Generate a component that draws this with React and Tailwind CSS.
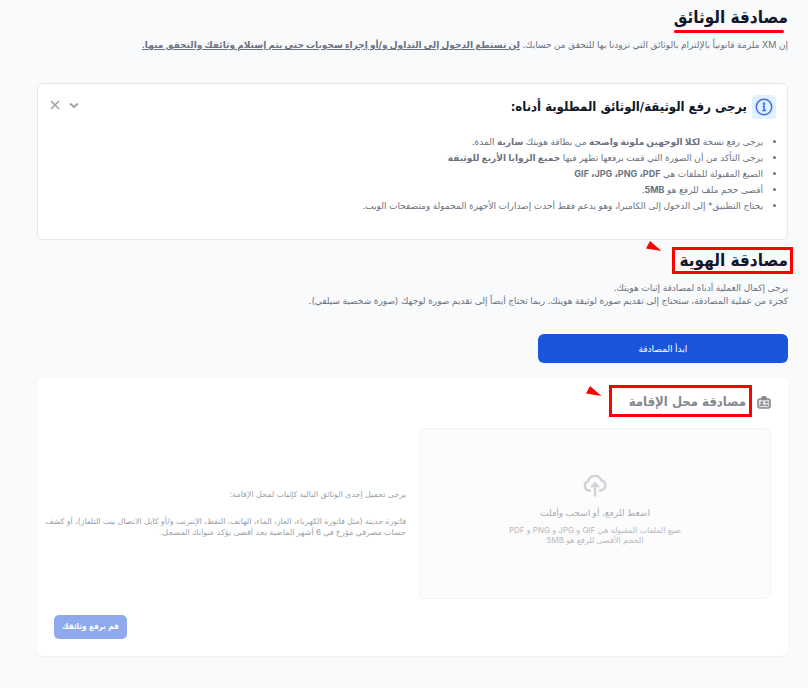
const requisitos = [
  <>
    يرجى رفع نسخة <b>لكلا الوجهين ملونة واضحة</b> من بطاقة هويتك <b>سارية</b> المدة.
  </>,
  <>
    يرجى التأكد من أن الصورة التي قمت برفعها تظهر فيها <b>جميع الزوايا الأربع للوثيقة</b>
  </>,
  <>
    الصيغ المقبولة للملفات هي <b>GIF ،JPG ،PNG ،PDF</b>
  </>,
  <>
    أقصى حجم ملف للرفع هو <b>5MB</b>.
  </>,
  <>يحتاج التطبيق* إلى الدخول إلى الكاميرا، وهو يدعم فقط أحدث إصدارات الأجهزة المحمولة ومتصفحات الويب.</>,
];

function InfoIcon() {
  return (
    <span className="flex h-6 w-6 shrink-0 items-center justify-center rounded bg-[#e1effe]">
      <svg viewBox="0 0 20 20" fill="none" stroke="#3f6fe4" strokeWidth="1.7" className="h-[18px] w-[18px]">
        <circle cx="10" cy="10" r="8.6" />
        <path d="M8.4 9.2h1.8v4.4M8 13.8h4.2" />
        <circle cx="10" cy="6.3" r="0.6" />
      </svg>
    </span>
  );
}

function IdIcon() {
  return (
    <svg viewBox="0 0 14 13" fill="none" stroke="#868a90" strokeWidth="1.6" className="h-[13px] w-[14px] shrink-0">
      <rect x="1" y="3" width="12" height="9" rx="2" fill="#e3e4e6" />
      <path d="M5 3.500V2a1.200 1.200 0 0 1 1.200-1.200h1.600A1.200 1.200 0 0 1 9 2v1.500Z" fill="#868a90" />
      <circle cx="4.8" cy="6.6" r="0.9" strokeWidth="1" fill="#868a90" />
      <path d="M2.800 10c.4-1.600 3.600-1.600 4 0M8.200 6.300h3.200M8.200 9.300h3.200" strokeWidth="1.400" />
    </svg>
  );
}

function UploadIcon() {
  return (
    <svg
      viewBox="0 0 24 24"
      fill="none"
      stroke="#cfd2d8"
      strokeWidth="2.4"
      strokeLinecap="round"
      strokeLinejoin="round"
      className="h-6 w-6"
    >
      <path d="M7 17.500H6.500A4.700 4.700 0 0 1 5.200 8.300 6.800 6.800 0 0 1 18.200 7.200 5.200 5.200 0 0 1 17.500 17.500H17M12 22.500V11M8.800 13.500 12 10.300l3.200 3.200" />
    </svg>
  );
}

function Flecha({ className }) {
  return (
    <svg viewBox="0 0 16 12" fill="#fe0000" className={`absolute h-3 w-4 ${className}`}>
      <path d="M4 1 15.500 11 0 8.500Z" />
    </svg>
  );
}

export default function App() {
  return (
    <div
      dir="rtl"
      className="min-h-screen bg-[#f9fafb] pt-1 pr-5 pb-8 pl-[37px] font-[Inter,'DejaVu_Sans',sans-serif] text-[#6b7280]"
    >
      {/* Documentos */}
      <header className="h-[79px]">
        <h1 className="relative inline-block font-['DejaVu_Sans_Condensed','DejaVu_Sans',sans-serif] text-[17px] leading-[26px] font-bold text-[#111827]">
          مصادقة الوثائق
          <span className="absolute top-[26px] right-1 left-0 h-[3px] rounded-full bg-[#fe0000]" />
        </h1>
        <p className="mt-2 text-[9px] leading-[14px] whitespace-nowrap">
          إن XM ملزمة قانونياً بالإلتزام بالوثائق التي تزودنا بها للتحقق من حسابك.{" "}
          <b className="underline">
            لن تستطع الدخول إلى التداول و/أو إجراء سحوبات حتى يتم إستلام وثائقك والتحقق منها.
          </b>
        </p>
      </header>

      <section className="rounded-md border border-[#e5e7eb] bg-white px-[11px] pt-[11px] pb-[25px]">
        <div className="flex items-center">
          <InfoIcon />
          <h2 className="mr-[5px] flex-1 font-['DejaVu_Sans_Condensed','DejaVu_Sans',sans-serif] text-[13px] leading-4 font-bold text-[#111827]">
            يرجى رفع الوثيقة/الوثائق المطلوبة أدناه:
          </h2>
          <div className="flex gap-[7px] pb-1 text-[#9ca3af]">
            <button type="button" aria-label="طي" className="flex h-3 w-3 items-center justify-center">
              <svg viewBox="0 0 12 12" fill="none" stroke="currentColor" strokeWidth="2" className="h-3 w-3">
                <path d="m2 4.500 4 3.500 4-3.500" />
              </svg>
            </button>
            <button type="button" aria-label="إغلاق" className="flex h-3 w-3 items-center justify-center">
              <svg viewBox="0 0 12 12" fill="none" stroke="currentColor" strokeWidth="1.600" className="h-3 w-3">
                <path d="m2 2 8 8M10 2l-8 8" />
              </svg>
            </button>
          </div>
        </div>
        <ul className="mt-[15px] list-disc pr-[13px] text-[9px] leading-4">
          {requisitos.map((texto, i) => (
            <li key={i}>{texto}</li>
          ))}
        </ul>
      </section>

      {/* Identidad */}
      <section className="mt-[7px]">
        <h2 className="relative inline-block font-['DejaVu_Sans_Condensed','DejaVu_Sans',sans-serif] text-[17px] leading-[26px] font-bold text-[#111827]">
          مصادقة الهوية
          <span className="absolute top-0 -right-[5px] -left-2 h-[27px] border-3 border-[#fe0000]" />
          <Flecha className="-top-[7px] -left-[34px]" />
        </h2>
        <p className="mt-2 text-[9px] leading-[13px]">
          يرجى إكمال العملية أدناه لمصادقة إثبات هويتك.
          <br />
          كجزء من عملية المصادقة، ستحتاج إلى تقديم صورة لوثيقة هويتك. ربما تحتاج أيضاً إلى تقديم صورة لوجهك (صورة شخصية سيلفي).
        </p>
        <button
          type="button"
          className="mt-[27px] block h-[29px] w-1/3 rounded-md bg-[#1a56db] text-[9px] font-medium text-white"
        >
          ابدأ المصادقة
        </button>
      </section>

      {/* Residencia */}
      <section className="mt-[15px] rounded-md bg-white px-[17px] pt-[15px] pb-[17px] shadow-xs">
        <div className="flex items-center gap-[11px]">
          <IdIcon />
          <h2 className="relative font-['DejaVu_Sans_Condensed','DejaVu_Sans',sans-serif] text-[13px] leading-[18px] font-bold text-[#868a90]">
            مصادقة محل الإقامة
            <span className="absolute -top-2 -right-[6px] -left-5 h-8 border-3 border-[#fe0000]" />
            <Flecha className="-top-2 -left-[43px]" />
          </h2>
        </div>
        <div className="mt-[17px] grid grid-cols-2 gap-[13px]">
          <button
            type="button"
            className="flex h-[171px] flex-col items-center justify-center rounded-md border border-[#f3f4f5] bg-[#fcfcfc] pb-2.5 text-[#a9adb5]"
          >
            <UploadIcon />
            <span className="mt-2 text-[9px] leading-4 font-medium">اضغط للرفع، أو اسحب وأفلت</span>
            <span className="mt-1 text-[8px] leading-[10px] text-[#b7bac0]">
              صيغ الملفات المقبولة هي GIF و JPG و PNG و PDF
              <br />
              الحجم الأقصى للرفع هو 5MB
            </span>
          </button>
          <div className="-ml-3 flex flex-col justify-center text-[8px] leading-[11px] text-[#9b9fa7]">
            <p>يرجى تحميل إحدى الوثائق التالية كإثبات لمحل الإقامة:</p>
            <p className="mt-4">
              فاتورة حديثة (مثل فاتورة الكهرباء، الغاز، الماء، الهاتف، النفط، الإنترنت و/أو كابل الاتصال ببث التلفاز)، أو
              كشف حساب مصرفي مؤرخ في 6 أشهر الماضية بحد أقصى يؤكد عنوانك المسجل.
            </p>
          </div>
        </div>
        <div className="mt-4 flex justify-end">
          <button
            type="button"
            className="h-6 rounded-[5px] bg-[#8faaec] px-2 font-['DejaVu_Sans_Condensed','DejaVu_Sans',sans-serif] text-[8px] font-bold text-white"
          >
            قم برفع وثائقك
          </button>
        </div>
      </section>
    </div>
  );
}
